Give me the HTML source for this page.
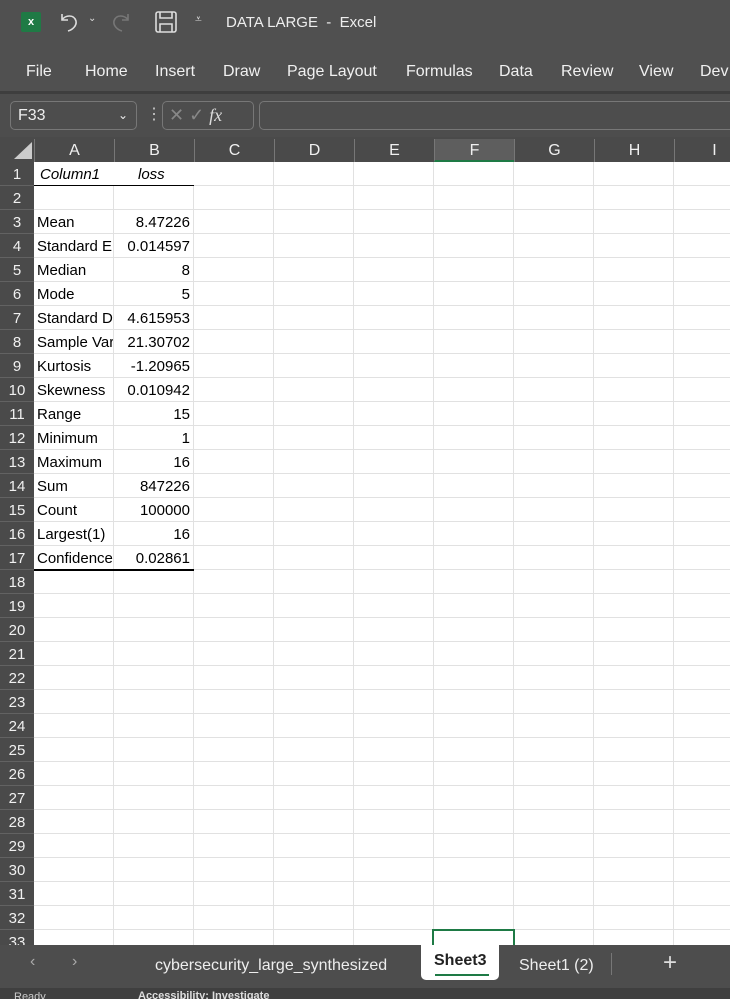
<!DOCTYPE html>
<html><head><meta charset="utf-8"><style>
*{margin:0;padding:0;box-sizing:border-box}
html,body{width:730px;height:999px;overflow:hidden}
body{background:#4d4d4d;font-family:"Liberation Sans",sans-serif;position:relative;color:#fff}
.a{position:absolute}
.menu span{position:absolute;top:63px;font-size:16px;color:#f0f0f0}
.grid{position:absolute;left:34px;top:162px;width:696px;height:783px;background:#fff;
background-image:linear-gradient(to right,#e1e1e1 1px,transparent 1px),linear-gradient(to bottom,transparent 23px,#e1e1e1 23px);
background-size:80px 100%,100% 24px;background-position:79px 0,0 0}
.rh{position:absolute;left:0;width:34px;height:24px;text-align:center;font-size:15px;line-height:26px;color:#f0f0f0;background:#4a4a4a;border-bottom:1px solid #626262}
.ch{position:absolute;top:139px;height:23px;width:80px;text-align:center;font-size:16px;line-height:24px;color:#f0f0f0;border-left:1px solid #777}
.c{position:absolute;font-size:15px;color:#000;height:24px;line-height:26px;white-space:nowrap;overflow:hidden}
.l{left:37px;width:76px}
.r{left:114px;width:76px;text-align:right}
</style></head><body>
<div class="a" style="left:0;top:0;width:730px;height:91px;background:#505050"></div>
<div class="a" style="left:0;top:91px;width:730px;height:3px;background:#3e3e3e"></div>
<div class="a" style="left:21px;top:12px;width:20px;height:20px;background:#1f7a45;border-radius:2px;font-size:11px;font-weight:bold;text-align:center;line-height:20px">x</div>
<svg class="a" style="left:58px;top:10px" width="24" height="24" viewBox="0 0 24 24" fill="none" stroke="#ddd" stroke-width="1.6"><path d="M4 4v6h6M4 10c3-5 12-6 14 1c1 5-4 9-8 10"/></svg>
<div class="a" style="left:88px;top:13px;font-size:10px;color:#ddd">⌄</div>
<svg class="a" style="left:108px;top:10px" width="24" height="24" viewBox="0 0 24 24" fill="none" stroke="#777" stroke-width="1.6"><path d="M20 4v6h-6M20 10c-3-5-12-6-14 1c-1 5 4 9 8 10"/></svg>
<svg class="a" style="left:155px;top:11px" width="22" height="22" viewBox="0 0 22 22" fill="none" stroke="#ddd" stroke-width="1.6"><rect x="1" y="1" width="20" height="20" rx="2"/><path d="M5 1v6h12V1M5 21v-8h12v8"/></svg>
<div class="a" style="left:195px;top:12px;font-size:12px;color:#ddd">⩡</div>
<div class="a" style="left:226px;top:14px;font-size:15px;color:#eee">DATA LARGE&nbsp; - &nbsp;Excel</div>
<div class="menu"><span style="left:26px">File</span><span style="left:85px">Home</span><span style="left:155px">Insert</span><span style="left:223px">Draw</span><span style="left:287px">Page Layout</span><span style="left:406px">Formulas</span><span style="left:499px">Data</span><span style="left:561px">Review</span><span style="left:639px">View</span><span style="left:700px">Dev</span></div>
<div class="a" style="left:10px;top:101px;width:127px;height:29px;border:1px solid #777;border-radius:5px;font-size:16px;line-height:27px;padding-left:7px;color:#eee">F33<span style="position:absolute;right:8px;font-size:12px">⌄</span></div>
<div class="a" style="left:146px;top:104px;font-size:16px;color:#ccc">⋮</div>
<div class="a" style="left:162px;top:101px;width:92px;height:29px;border:1px solid #777;border-radius:5px;font-size:18px;line-height:27px;color:#888;padding-left:6px">✕ ✓ <i style="color:#ddd;font-family:'Liberation Serif',serif">fx</i></div>
<div class="a" style="left:259px;top:101px;width:480px;height:29px;border:1px solid #777;border-radius:5px"></div>
<div class="a" style="left:0;top:137px;width:730px;height:25px;background:#4a4a4a"></div>
<div class="a" style="left:14px;top:142px;width:0;height:0;border-left:18px solid transparent;border-bottom:17px solid #ccc"></div>
<div class="ch" style="left:34px">A</div><div class="ch" style="left:114px">B</div><div class="ch" style="left:194px">C</div><div class="ch" style="left:274px">D</div><div class="ch" style="left:354px">E</div><div class="ch" style="left:434px;background:#5e5e5e;border-bottom:2px solid #1e7a45">F</div><div class="ch" style="left:514px">G</div><div class="ch" style="left:594px">H</div><div class="ch" style="left:674px">I</div>
<div class="grid"></div>
<div class="a" style="left:0;top:162px;width:34px;height:783px;background:#4a4a4a">
<div class="rh" style="top:0">1</div><div class="rh" style="top:24px">2</div><div class="rh" style="top:48px">3</div><div class="rh" style="top:72px">4</div><div class="rh" style="top:96px">5</div><div class="rh" style="top:120px">6</div><div class="rh" style="top:144px">7</div><div class="rh" style="top:168px">8</div><div class="rh" style="top:192px">9</div><div class="rh" style="top:216px">10</div><div class="rh" style="top:240px">11</div><div class="rh" style="top:264px">12</div><div class="rh" style="top:288px">13</div><div class="rh" style="top:312px">14</div><div class="rh" style="top:336px">15</div><div class="rh" style="top:360px">16</div><div class="rh" style="top:384px">17</div><div class="rh" style="top:408px">18</div><div class="rh" style="top:432px">19</div><div class="rh" style="top:456px">20</div><div class="rh" style="top:480px">21</div><div class="rh" style="top:504px">22</div><div class="rh" style="top:528px">23</div><div class="rh" style="top:552px">24</div><div class="rh" style="top:576px">25</div><div class="rh" style="top:600px">26</div><div class="rh" style="top:624px">27</div><div class="rh" style="top:648px">28</div><div class="rh" style="top:672px">29</div><div class="rh" style="top:696px">30</div><div class="rh" style="top:720px">31</div><div class="rh" style="top:744px">32</div><div class="rh" style="top:768px">33</div>
</div>
<div class="a" style="left:34px;top:162px;width:160px;height:24px;background:#fff;border-bottom:1px solid #000"></div>
<div class="c" style="left:40px;top:162px;font-style:italic">Column1</div><div class="c" style="left:138px;top:162px;font-style:italic">loss</div>
<div class="a" style="left:34px;top:569px;width:160px;height:2px;background:#000"></div>
<div class="c l" style="top:210px">Mean</div><div class="c r" style="top:210px">8.47226</div>
<div class="c l" style="top:234px">Standard Error</div><div class="c r" style="top:234px">0.014597</div>
<div class="c l" style="top:258px">Median</div><div class="c r" style="top:258px">8</div>
<div class="c l" style="top:282px">Mode</div><div class="c r" style="top:282px">5</div>
<div class="c l" style="top:306px">Standard Deviation</div><div class="c r" style="top:306px">4.615953</div>
<div class="c l" style="top:330px">Sample Variance</div><div class="c r" style="top:330px">21.30702</div>
<div class="c l" style="top:354px">Kurtosis</div><div class="c r" style="top:354px">-1.20965</div>
<div class="c l" style="top:378px">Skewness</div><div class="c r" style="top:378px">0.010942</div>
<div class="c l" style="top:402px">Range</div><div class="c r" style="top:402px">15</div>
<div class="c l" style="top:426px">Minimum</div><div class="c r" style="top:426px">1</div>
<div class="c l" style="top:450px">Maximum</div><div class="c r" style="top:450px">16</div>
<div class="c l" style="top:474px">Sum</div><div class="c r" style="top:474px">847226</div>
<div class="c l" style="top:498px">Count</div><div class="c r" style="top:498px">100000</div>
<div class="c l" style="top:522px">Largest(1)</div><div class="c r" style="top:522px">16</div>
<div class="c l" style="top:546px">Confidence Level</div><div class="c r" style="top:546px">0.02861</div>
<div class="a" style="left:432px;top:929px;width:83px;height:20px;border:2px solid #1e7a45"></div>
<div class="a" style="left:0;top:945px;width:730px;height:43px;background:#4d4d4d"></div>
<div class="a" style="left:30px;top:953px;font-size:16px;color:#aaa">‹</div>
<div class="a" style="left:72px;top:953px;font-size:16px;color:#aaa">›</div>
<div class="a" style="left:155px;top:957px;font-size:16px;color:#eee">cybersecurity_large_synthesized</div>
<div class="a" style="left:421px;top:945px;width:78px;height:35px;background:#fff;border-radius:0 0 5px 5px"></div>
<div class="a" style="left:434px;top:952px;font-size:16px;font-weight:bold;color:#222">Sheet3</div>
<div class="a" style="left:435px;top:974px;width:54px;height:2px;background:#1e7a45"></div>
<div class="a" style="left:519px;top:957px;font-size:16px;color:#eee">Sheet1 (2)</div>
<div class="a" style="left:611px;top:953px;width:1px;height:22px;background:#777"></div>
<div class="a" style="left:663px;top:949px;font-size:24px;color:#ddd">+</div>
<div class="a" style="left:0;top:988px;width:730px;height:11px;background:#3f3f3f"></div>
<div class="a" style="left:14px;top:991px;font-size:11px;color:#ccc">Ready</div>
<div class="a" style="left:138px;top:990px;font-size:11px;font-weight:bold;color:#ddd">Accessibility: Investigate</div>
</body></html>
